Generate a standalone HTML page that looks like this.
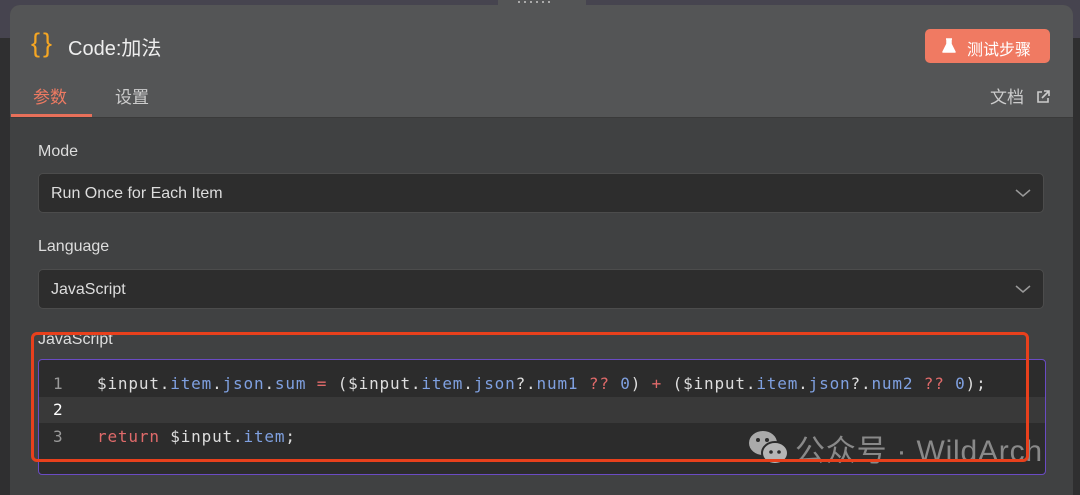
<!DOCTYPE html>
<html><head><meta charset="utf-8"><style>
*{margin:0;padding:0;box-sizing:border-box}
body{width:1080px;height:488px;background:#2f2f30;position:relative;overflow:hidden;font-family:"Liberation Sans","Noto Sans CJK SC",sans-serif;color:#e6e6e6}
.top{position:absolute;left:0;top:0;width:1080px;height:38px;background:#46444f}
.grip{position:absolute;left:498px;top:0;width:88px;height:8px;background:#545556}
.grip span{position:absolute;top:1px;width:2px;height:2px;background:#aaa}
.panel{position:absolute;left:10px;top:5px;width:1063px;height:490px;background:#404142;border-radius:10px 10px 0 0;overflow:hidden}
.head{position:absolute;left:0;top:0;width:100%;height:113px;background:#545556;border-bottom:1px solid #3a3a3a}
.abs{position:absolute;white-space:nowrap}
.sel{position:absolute;left:28px;width:1006px;height:40px;background:#2d2d2d;border:1px solid #4c4c4c;border-radius:5px;font-size:16px;color:#ddd;padding:11px 12px}
.lab{position:absolute;left:28px;font-size:16px;color:#ddd}
.code{position:absolute;left:28px;top:354px;width:1008px;height:116px;background:#2c2c2c;border:1.5px solid #6a4bc4;border-radius:4px;overflow:hidden;font-family:"DejaVu Sans Mono","Liberation Mono",monospace;font-size:16px;letter-spacing:0.83px}
.row{position:absolute;left:0;width:100%;height:26px}
.ln{position:absolute;left:14px;color:#999}
.tx{position:absolute;left:58px;color:#ddd;white-space:pre}
.b{color:#7fa0e0}.r{color:#e06a6a}
</style></head><body>
<div class="top"></div>
<div class="panel">
 <div class="head">
  <div class="abs" style="left:21px;top:23px;font-size:27px;color:#f5a623;letter-spacing:3px">{}</div>
  <div class="abs" style="left:58px;top:27px;font-size:20px;color:#eee">Code:加法</div>
  <div class="abs" style="left:915px;top:24px;width:125px;height:34px;background:#f07a62;border-radius:5px;color:#fff;font-size:16px;padding:7px 0 0 42px">测试步骤
   <svg style="position:absolute;left:17px;top:9px" width="14" height="16" viewBox="0 0 14 16"><path d="M4 1h6M5 1v5L1 14h12L9 6V1" fill="#fff" stroke="#fff" stroke-width="1.5" stroke-linejoin="round"/></svg></div>
  <div class="abs" style="left:23px;top:78px;font-size:17px;color:#ee7a62">参数</div>
  <div class="abs" style="left:1px;top:109px;width:81px;height:3px;background:#e8705a"></div>
  <div class="abs" style="left:105px;top:78px;font-size:17px;color:#ccc">设置</div>
  <div class="abs" style="left:980px;top:78px;font-size:17px;color:#ccc">文档</div>
  <svg style="position:absolute;left:1026px;top:85px" width="14" height="14" viewBox="0 0 14 14"><path d="M6 2H2v10h10V8M8 1h5v5M13 1L6 8" fill="none" stroke="#ccc" stroke-width="1.6"/></svg>
 </div>
 <div class="lab" style="top:138px">Mode</div>
 <div class="sel" style="top:168px">Run Once for Each Item<svg style="position:absolute;right:12px;top:14px" width="16" height="10"><path d="M1 2l7 6 7-6" fill="none" stroke="#999" stroke-width="1.5"/></svg></div>
 <div class="lab" style="top:233px">Language</div>
 <div class="sel" style="top:264px">JavaScript<svg style="position:absolute;right:12px;top:14px" width="16" height="10"><path d="M1 2l7 6 7-6" fill="none" stroke="#999" stroke-width="1.5"/></svg></div>
 <div class="lab" style="top:326px;font-size:16px">JavaScript</div>
 <div class="code">
  <div class="row" style="top:14px"><span class="ln">1</span><span class="tx">$input.<span class="b">item</span>.<span class="b">json</span>.<span class="b">sum</span> <span class="r">=</span> ($input.<span class="b">item</span>.<span class="b">json</span>?.<span class="b">num1</span> <span class="r">??</span> <span class="b">0</span>) <span class="r">+</span> ($input.<span class="b">item</span>.<span class="b">json</span>?.<span class="b">num2</span> <span class="r">??</span> <span class="b">0</span>);</span></div>
  <div class="row" style="top:37px;background:#393939"><span class="ln" style="color:#fff;top:3px">2</span></div>
  <div class="row" style="top:67px"><span class="ln">3</span><span class="tx"><span class="r">return</span> $input.<span class="b">item</span>;</span></div>
 </div>
 <svg style="position:absolute;left:738px;top:425px" width="42" height="36" viewBox="0 0 42 36"><ellipse cx="15" cy="13" rx="14" ry="12" fill="#aaa"/><ellipse cx="27" cy="23" rx="13" ry="11" fill="#b5b5b5" stroke="#2c2c2c" stroke-width="2"/><circle cx="10" cy="10" r="2" fill="#2c2c2c"/><circle cx="19" cy="10" r="2" fill="#2c2c2c"/><circle cx="23" cy="22" r="1.8" fill="#2c2c2c"/><circle cx="31" cy="22" r="1.8" fill="#2c2c2c"/></svg>
 <div class="abs" style="left:785px;top:421px;font-size:30px;color:rgba(200,200,200,.6);letter-spacing:0.8px">公众号 · WildArch</div>
 <div class="abs" style="left:21px;top:327px;width:998px;height:130px;border:3px solid #e8401c;border-radius:6px"></div>
</div>
<div class="grip"><span style="left:20px"></span><span style="left:26px"></span><span style="left:32px"></span><span style="left:38px"></span><span style="left:44px"></span><span style="left:50px"></span></div>
</body></html>
